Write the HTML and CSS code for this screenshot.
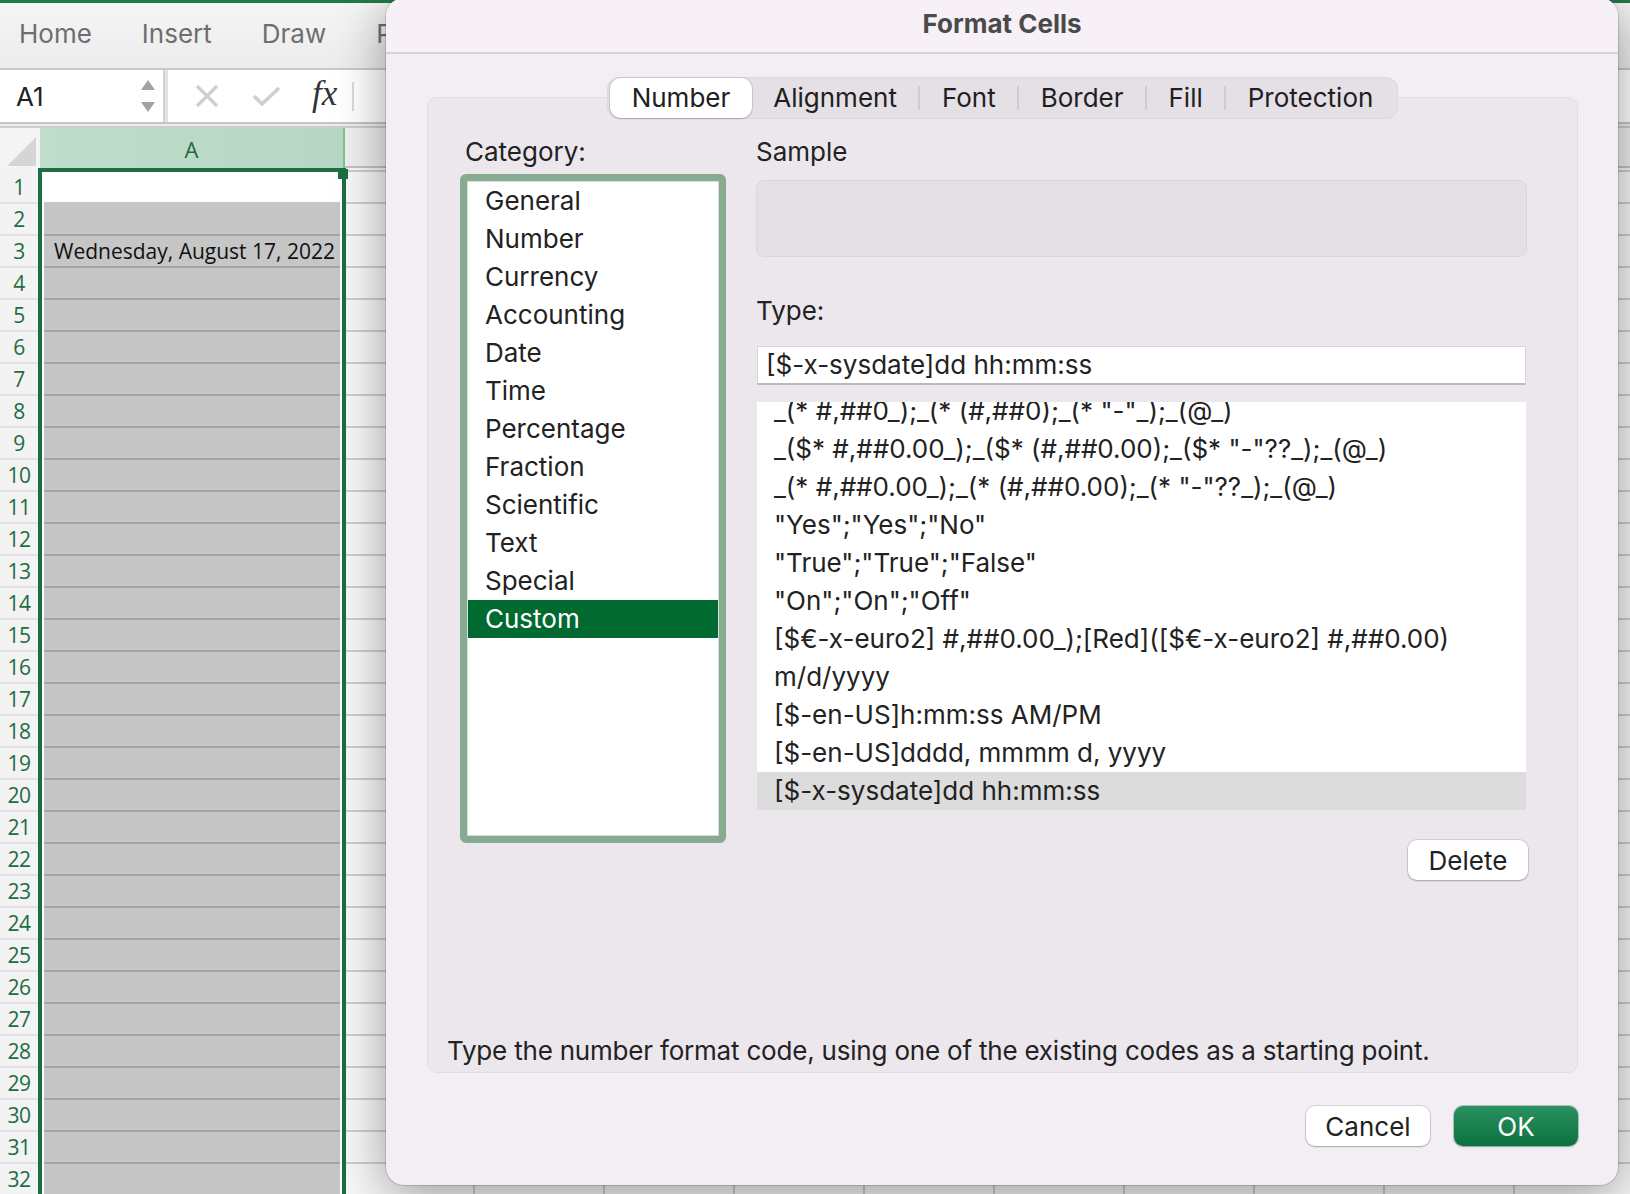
FILE: index.html
```html
<!DOCTYPE html>
<html>
<head>
<meta charset="utf-8">
<title>Format Cells</title>
<link rel="stylesheet" href="styles.css">
</head>
<body>
<div class="app">
  <div class="topstrip"></div>
  <div class="ribbon">
    <span class="rtab">Home</span>
    <span class="rtab">Insert</span>
    <span class="rtab">Draw</span>
    <span class="rtab">Page Layout</span>
  </div>
  <div class="fbar">
    <div class="namebox">
      <span>A1</span>
      <svg class="nb-arrows" width="16" height="34" viewBox="0 0 16 34">
        <path d="M1 11 L8 1 L15 11 Z" fill="#a3a3a3"/>
        <path d="M1 23 L8 33 L15 23 Z" fill="#a3a3a3"/>
      </svg>
    </div>
    <div class="fdivider"></div>
    <div class="ficons">
      <svg class="ic-x" width="24" height="24" viewBox="0 0 24 24"><path d="M2 2 L22 22 M22 2 L2 22" stroke="#cfcfcf" stroke-width="3.2" stroke-linecap="butt" fill="none"/></svg>
      <svg class="ic-check" width="29" height="21" viewBox="0 0 29 21"><path d="M2 10 L10 18 L27 2" stroke="#cfcfcf" stroke-width="3.6" fill="none"/></svg>
      <span class="fx">fx</span>
      <span class="fsepline"></span>
    </div>
  </div>
  <div class="fsep"></div>
  <div class="sheet">
    <div class="colheads">
      <div class="corner">
        <svg width="40" height="40" viewBox="0 0 40 40"><path d="M7 38 L36 9 L36 38 Z" fill="#d5d5d5"/></svg>
      </div>
      <div class="colA-head">A</div>
      <div class="colrest-head"></div>
    </div>
    <div class="grid">
      <div class="rowheads">
        <div class="rh first">1</div>
        <div class="rh">2</div><div class="rh">3</div><div class="rh">4</div><div class="rh">5</div>
        <div class="rh">6</div><div class="rh">7</div><div class="rh">8</div><div class="rh">9</div>
        <div class="rh">10</div><div class="rh">11</div><div class="rh">12</div><div class="rh">13</div>
        <div class="rh">14</div><div class="rh">15</div><div class="rh">16</div><div class="rh">17</div>
        <div class="rh">18</div><div class="rh">19</div><div class="rh">20</div><div class="rh">21</div>
        <div class="rh">22</div><div class="rh">23</div><div class="rh">24</div><div class="rh">25</div>
        <div class="rh">26</div><div class="rh">27</div><div class="rh">28</div><div class="rh">29</div>
        <div class="rh">30</div><div class="rh">31</div><div class="rh">32</div>
      </div>
      <div class="colA">
        <div class="handle"></div>
        <div class="cell1"></div>
        <div class="gcell first"></div>
        <div class="gcell text">Wednesday, August 17, 2022</div>
        <div class="gcell"></div><div class="gcell"></div><div class="gcell"></div><div class="gcell"></div>
        <div class="gcell"></div><div class="gcell"></div><div class="gcell"></div><div class="gcell"></div>
        <div class="gcell"></div><div class="gcell"></div><div class="gcell"></div><div class="gcell"></div>
        <div class="gcell"></div><div class="gcell"></div><div class="gcell"></div><div class="gcell"></div>
        <div class="gcell"></div><div class="gcell"></div><div class="gcell"></div><div class="gcell"></div>
        <div class="gcell"></div><div class="gcell"></div><div class="gcell"></div><div class="gcell"></div>
        <div class="gcell"></div><div class="gcell"></div><div class="gcell"></div><div class="gcell"></div>
        <div class="gcell"></div><div class="gcell"></div><div class="gcell"></div>
      </div>
      <div class="rest"></div>
    </div>
  </div>

  <div class="dialog">
    <div class="dlg-title">Format Cells</div>
    <div class="dlg-body">
      <div class="tabs">
        <div class="tab active">Number</div>
        <div class="tab">Alignment</div>
        <span class="tsep"></span>
        <div class="tab">Font</div>
        <span class="tsep"></span>
        <div class="tab">Border</div>
        <span class="tsep"></span>
        <div class="tab">Fill</div>
        <span class="tsep"></span>
        <div class="tab">Protection</div>
      </div>
      <div class="panel">
        <div class="panel-main">
          <div class="left-col">
            <div class="label cat-label">Category:</div>
            <div class="catbox">
              <div class="catlist">
                <div class="item">General</div>
                <div class="item">Number</div>
                <div class="item">Currency</div>
                <div class="item">Accounting</div>
                <div class="item">Date</div>
                <div class="item">Time</div>
                <div class="item">Percentage</div>
                <div class="item">Fraction</div>
                <div class="item">Scientific</div>
                <div class="item">Text</div>
                <div class="item">Special</div>
                <div class="item selected">Custom</div>
              </div>
            </div>
          </div>
          <div class="right-col">
            <div class="label">Sample</div>
            <div class="sample"></div>
            <div class="label type-label">Type:</div>
            <div class="type-input">[$-x-sysdate]dd hh:mm:ss</div>
            <div class="type-list">
              <div class="tl-inner">
                <div class="titem">_(* #,##0_);_(* (#,##0);_(* "-"_);_(@_)</div>
                <div class="titem">_($* #,##0.00_);_($* (#,##0.00);_($* "-"??_);_(@_)</div>
                <div class="titem">_(* #,##0.00_);_(* (#,##0.00);_(* "-"??_);_(@_)</div>
                <div class="titem">"Yes";"Yes";"No"</div>
                <div class="titem">"True";"True";"False"</div>
                <div class="titem">"On";"On";"Off"</div>
                <div class="titem">[$€-x-euro2] #,##0.00_);[Red]([$€-x-euro2] #,##0.00)</div>
                <div class="titem">m/d/yyyy</div>
                <div class="titem">[$-en-US]h:mm:ss AM/PM</div>
                <div class="titem">[$-en-US]dddd, mmmm d, yyyy</div>
                <div class="titem selected">[$-x-sysdate]dd hh:mm:ss</div>
              </div>
            </div>
            <div class="delete-row"><button class="btn">Delete</button></div>
          </div>
        </div>
        <div class="desc">Type the number format code, using one of the existing codes as a starting point.</div>
      </div>
      <div class="footer">
        <button class="btn">Cancel</button>
        <button class="btn ok">OK</button>
      </div>
    </div>
  </div>
</div>
</body>
</html>
```

FILE: styles.css
```css
* { box-sizing: border-box; }
html, body { margin: 0; padding: 0; }
body {
  width: 1630px;
  height: 1194px;
  overflow: hidden;
  background: #ffffff;
  font-family: "Inter", "Noto Sans", sans-serif;
}
.app {
  position: relative;
  width: 1630px;
  height: 1194px;
  overflow: hidden;
  display: flex;
  flex-direction: column;
}
.topstrip { flex: none; height: 3px; background: #23784a; }
.ribbon {
  flex: none;
  height: 67px;
  background: linear-gradient(#f5f5f5, #ececec);
  border-bottom: 2px solid #c9c9c9;
  display: flex;
  align-items: center;
  gap: 50px;
  padding: 0 0 5px 19px;
  font-size: 26px;
  color: #6e6e6e;
  white-space: nowrap;
}
.fbar {
  flex: none;
  height: 52px;
  display: flex;
  background: #ffffff;
}
.namebox {
  width: 163px;
  display: flex;
  align-items: center;
  justify-content: space-between;
  padding: 0 7px 0 16px;
  font-size: 26px;
  color: #222222;
  background: #ffffff;
}
.nb-arrows { display: block; }
.fdivider {
  width: 5px;
  background: #e2e2e2;
  border-left: 2px solid #d2d2d2;
}
.ficons {
  flex: 1;
  display: flex;
  align-items: center;
  padding-left: 27px;
}
.ic-x { display: block; }
.ic-check { display: block; margin-left: 33px; }
.fx {
  margin-left: 31px;
  font-family: "Liberation Serif", "DejaVu Serif", serif;
  font-style: italic;
  font-size: 35px;
  line-height: 40px;
  color: #333333;
  padding-bottom: 4px;
}
.fsepline {
  margin-left: 15px;
  width: 2px;
  height: 29px;
  background: #dadada;
}
.fsep {
  flex: none;
  height: 6px;
  border-top: 2px solid #c4c4c4;
  border-bottom: 2px solid #cdcdcd;
  background: #ededed;
}
.sheet {
  flex: 1;
  display: flex;
  flex-direction: column;
  min-height: 0;
}
.colheads { flex: none; height: 40px; display: flex; }
.corner { width: 40px; background: #f4f4f4; }
.corner svg { display: block; }
.colA-head {
  width: 305px;
  background: linear-gradient(to right, #bfddca, #b7d6c3);
  border-right: 2px solid #79c493;
  color: #1c6a3d;
  font-family: "Open Sans", "Noto Sans", sans-serif;
  font-size: 22px;
  display: flex;
  align-items: center;
  justify-content: center;
  padding-top: 2px;
}
.colrest-head {
  flex: 1;
  background-color: #efefef;
  background-image: linear-gradient(to right, transparent 128px, #d0d0d0 128px);
  background-size: 130px 100%;
  background-position: 0 0;
  border-bottom: 2px solid #c3c3c3;
}
.grid { flex: 1; display: flex; min-height: 0; overflow: hidden; }
.rowheads { width: 38px; background: #f3f3f3; }
.rh {
  height: 32px;
  border-top: 2px solid #e3e3e3;
  display: flex;
  align-items: center;
  justify-content: center;
  color: #1d6d3f;
  font-family: "Open Sans", "Noto Sans", sans-serif;
  font-size: 21px;
  letter-spacing: -0.5px;
}
.rh.first { height: 34px; border-top: none; padding-top: 4px; }
.colA {
  position: relative;
  width: 308px;
  border: 4px solid #1e6e41;
  border-bottom: none;
  padding: 0 2px;
  background: #ffffff;
}
.handle {
  position: absolute;
  left: 296px;
  top: -3px;
  width: 10px;
  height: 10px;
  background: #1e6e41;
}
.cell1 { height: 30px; background: #ffffff; }
.gcell {
  height: 32px;
  background: #c6c6c6;
  border-top: 2px solid #a5a5a5;
}
.gcell.first { border-top: none; }
.gcell.text {
  padding-left: 10px;
  font-family: "Open Sans", "Noto Sans", sans-serif;
  font-size: 21px;
  line-height: 30px;
  color: #111111;
  white-space: nowrap;
}
.rest {
  flex: 1;
  background-color: #f7f7f7;
  background-image:
    linear-gradient(to bottom, transparent 30px, #cdcdcd 30px),
    linear-gradient(to right, transparent 128px, #cdcdcd 128px);
  background-size: 100% 32px, 130px 100%;
  background-position: 0 4px, -1px 0;
}

/* Dialog */
.dialog {
  position: absolute;
  left: 386px;
  top: -2px;
  width: 1232px;
  height: 1187px;
  border-radius: 18px;
  background: #f2eef3;
  box-shadow: 0 0 0 1px rgba(0,0,0,0.14), 0 10px 50px rgba(0,0,0,0.38);
  display: flex;
  flex-direction: column;
  overflow: hidden;
  color: #222222;
}
.dlg-title {
  flex: none;
  height: 56px;
  background: #f7f1f7;
  border-bottom: 2px solid #d6d0d6;
  display: flex;
  align-items: center;
  justify-content: center;
  padding-bottom: 3px;
  font-size: 26px;
  font-weight: 700;
  color: #4a4a4a;
}
.dlg-body {
  flex: 1;
  display: flex;
  flex-direction: column;
  padding: 23px 40px 0 41px;
}
.tabs {
  position: relative;
  z-index: 1;
  align-self: center;
  height: 42px;
  margin-bottom: -22px;
  display: flex;
  align-items: center;
  padding: 0 2px;
  background: #e4e0e5;
  border: 1px solid #dcd8dd;
  border-radius: 12px;
  font-size: 26px;
  color: #202020;
}
.tab {
  height: 40px;
  line-height: 40px;
  padding: 0 21.5px;
  white-space: nowrap;
}
.tab.active {
  background: #ffffff;
  border-radius: 11px;
  box-shadow: 0 0 0 1px rgba(0,0,0,0.08), 0 1px 2px rgba(0,0,0,0.18);
}
.tsep { width: 2px; height: 24px; background: #cfcbd0; }
.panel {
  flex: none;
  height: 976px;
  background: #ebe7ec;
  border: 1px solid #e0dce1;
  border-radius: 10px;
  display: flex;
  flex-direction: column;
  padding-top: 38px;
}
.panel-main {
  display: flex;
  padding-left: 32px;
  gap: 30px;
}
.left-col { width: 266px; }
.right-col { width: 771px; display: flex; flex-direction: column; }
.label {
  height: 32px;
  line-height: 32px;
  font-size: 26px;
  white-space: nowrap;
}
.cat-label { padding-left: 5px; }
.catbox {
  margin-top: 6px;
  height: 669px;
  border: 7px solid #87ab90;
  border-radius: 6px;
  background: #ffffff;
}
.catlist {
  height: 100%;
  border: 1px solid #dadada;
  background: #ffffff;
}
.item {
  height: 38px;
  line-height: 38px;
  padding-left: 17px;
  font-size: 26px;
  color: #222222;
}
.item.selected { background: #016a31; color: #ffffff; }
.sample {
  margin-top: 12px;
  height: 77px;
  background: #e4e0e5;
  border: 1px solid #dad6db;
  border-radius: 8px;
}
.type-label { margin-top: 38px; }
.type-input {
  margin: 19px 1px 0 1px;
  height: 39px;
  background: #ffffff;
  border: 1px solid #d8d4d9;
  border-bottom: 2px solid #bdb9be;
  padding-left: 8px;
  font-size: 26px;
  line-height: 35px;
  white-space: nowrap;
}
.type-list {
  margin: 17px 1px 0 1px;
  height: 408px;
  background: #ffffff;
  overflow: hidden;
}
.tl-inner { margin-top: -10px; }
.titem {
  height: 38px;
  line-height: 38px;
  padding-left: 17px;
  font-size: 26px;
  color: #222222;
  white-space: nowrap;
}
.titem.selected { background: #dcdcdc; }
.delete-row {
  margin-top: 30px;
  display: flex;
  justify-content: flex-end;
  margin-right: -1px;
}
.btn {
  width: 120px;
  height: 40px;
  border: none;
  border-radius: 9px;
  background: #ffffff;
  box-shadow: 0 0 0 1px rgba(0,0,0,0.10), 0 1px 2px rgba(0,0,0,0.22);
  font-family: "Inter", "Noto Sans", sans-serif;
  font-size: 26px;
  color: #222222;
  padding: 0;
}
.desc {
  margin-top: auto;
  padding: 0 0 5px 19px;
  height: 37px;
  line-height: 32px;
  font-size: 26px;
  letter-spacing: -0.2px;
  white-space: nowrap;
}
.footer {
  margin-top: 33px;
  display: flex;
  justify-content: flex-end;
  gap: 24px;
}
.footer .btn { width: 124px; }
.btn.ok {
  background: linear-gradient(#2a925e, #0b7140);
  color: #ffffff;
  box-shadow: 0 0 0 1px rgba(0,80,40,0.25), 0 1px 2px rgba(0,0,0,0.2);
}
```
